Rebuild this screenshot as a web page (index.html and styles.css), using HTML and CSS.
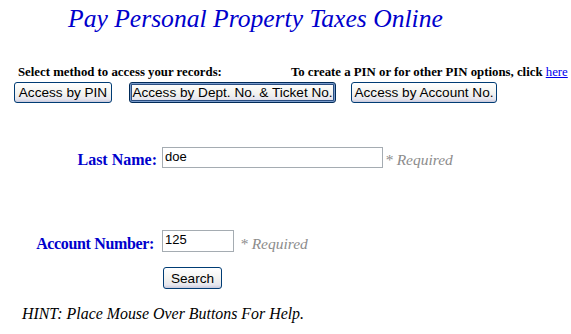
FILE: index.html
```html
<!DOCTYPE html>
<html>
<head>
<meta charset="utf-8">
<link rel="stylesheet" href="styles.css">
</head>
<body>
<div class="page">
  <h1 class="title">Pay Personal Property Taxes Online</h1>
  <div class="select-row">
    <span class="select-label">Select method to access your records:</span>
    <span class="pin-note">To create a PIN or for other PIN options, click <a href="#" class="here">here</a></span>
  </div>
  <div class="method-row">
    <button class="xp-btn btn-pin">Access by PIN</button>
    <button class="xp-btn btn-dept focused">Access by Dept. No. &amp; Ticket No.</button>
    <button class="xp-btn btn-acct">Access by Account No.</button>
  </div>
  <div class="field-row row-last">
    <label class="field-label label-last">Last Name:</label>
    <input class="field-input input-last" type="text" value="doe">
    <span class="req req-last">* Required</span>
  </div>
  <div class="field-row row-acct">
    <label class="field-label label-acct">Account Number:</label>
    <input class="field-input input-acct" type="text" value="125">
    <span class="req req-acct">* Required</span>
  </div>
  <div class="search-row">
    <button class="xp-btn btn-search">Search</button>
  </div>
  <p class="hint">HINT: Place Mouse Over Buttons For Help.</p>
</div>
</body>
</html>
```
FILE: styles.css
```css
html, body {
  margin: 0;
  padding: 0;
  background: #ffffff;
}
body {
  font-family: "Liberation Serif", "Times New Roman", serif;
  color: #000;
}
.page {
  width: 571px;
  height: 334px;
  overflow: hidden;
}
.title {
  margin: 0;
  padding: 4px 0 0 68px;
  height: 36px;
  font-size: 25.6px;
  line-height: 30px;
  font-weight: normal;
  font-style: italic;
  color: #0000cc;
  white-space: nowrap;
}
.select-row {
  display: flex;
  margin-top: 23px;
  height: 18px;
  align-items: baseline;
  font-size: 12.8px;
  font-weight: bold;
  line-height: 18px;
}
.select-label {
  margin-left: 18px;
}
.pin-note {
  margin-left: 69px;
  white-space: nowrap;
}
.here {
  font-weight: normal;
  color: #0000ee;
  text-decoration: underline;
}
.method-row {
  display: flex;
  margin-top: 1px;
  padding-left: 14px;
  height: 21px;
}
.xp-btn {
  font-family: "Liberation Sans", Arial, sans-serif;
  font-size: 13.6px;
  height: 21px;
  padding: 0 2px;
  border: 1px solid #003c74;
  border-radius: 3px;
  background: linear-gradient(#ffffff 0%, #f4f4f0 50%, #e6e6ee 85%, #c8c8dc 100%);
  color: #000;
  line-height: 17px;
  white-space: nowrap;
}
.btn-pin { width: 98px; }
.btn-dept { width: 207px; margin-left: 17px; }
.btn-acct { width: 146px; margin-left: 15px; }
.focused {
  box-shadow: inset 0 0 0 1px #7a9ccc, inset 0 0 0 2px #2a4d80;
  border-color: #002a58;
}
.field-row {
  display: flex;
  align-items: flex-end;
  height: 22px;
}
.row-last { margin-top: 43px; }
.row-acct { margin-top: 62px; height: 22px; }
.field-label {
  font-size: 16px;
  line-height: 16px;
  font-weight: bold;
  color: #0000cc;
  text-align: right;
  width: 157px;
  white-space: nowrap;
}
.label-acct { width: 154px; letter-spacing: -0.35px; }
.field-input {
  box-sizing: border-box;
  height: 22px;
  border: 1px solid #a5acb2;
  font-family: "Liberation Sans", Arial, sans-serif;
  font-size: 13px;
  padding: 0 2px 3px;
  margin: 0 0 0 5px;
  color: #000;
  background: #fff;
  outline: none;
}
.input-last { width: 221px; height: 21px; }
.input-acct { width: 72px; margin-left: 8px; }
.req {
  font-style: italic;
  color: #8c8c8c;
  font-size: 15.5px;
  line-height: 16px;
  margin-left: 2px;
  white-space: nowrap;
}
.req-acct { margin-left: 6px; }
.search-row {
  margin-top: 15px;
  padding-left: 163px;
  height: 22px;
}
.btn-search {
  width: 59px;
  height: 22px;
}
.hint {
  margin: 16px 0 0 22px;
  font-size: 15.9px;
  font-style: italic;
  line-height: 18px;
}
```
